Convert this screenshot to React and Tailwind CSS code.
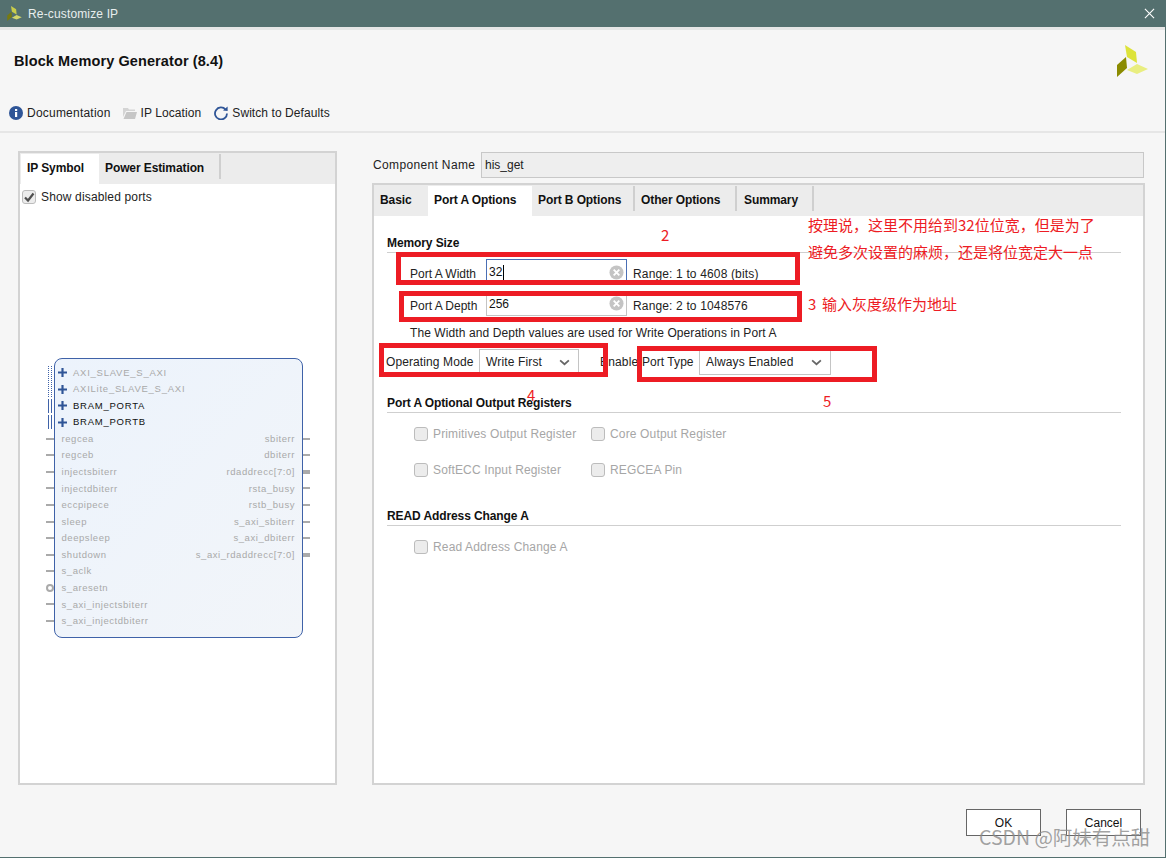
import React from "react";

const CJK = "font-['Noto_Sans_CJK_SC','Liberation_Sans',sans-serif]";

function Logo({ className, dim }) {
  return (
    <svg viewBox="0 0 31 32" className={className}>
      <polygon points="8,0 19,7 20,18 10,12" fill={dim ? "#c9cc4a" : "#dde33a"} />
      <polygon points="9,12 10,23 0,32 0,20" fill={dim ? "#777a10" : "#8b8b00"} />
      <polygon points="10,25 20,19 31,24 20,29" fill={dim ? "#d3d66a" : "#e9ee80"} />
    </svg>
  );
}

function Tool({ icon, label, className, textClass }) {
  return (
    <div className={"flex items-center gap-[4px] " + (className || "")}>
      {icon}
      <span className={"text-[#222] " + (textClass || "tracking-[0.08px]")}>{label}</span>
    </div>
  );
}

function Check({ checked, label, disabled, className }) {
  return (
    <div className={"flex h-[14px] items-center " + (className || "")}>
      <div className="flex h-[14px] w-[14px] shrink-0 items-center justify-center rounded-[3px] border border-[#bcbcbc] bg-[#ececec]">
        {checked && (
          <svg viewBox="0 0 12 12" className="h-[12px] w-[12px]">
            <path d="M2 6.5 L5 9.5 L10.5 2.5" fill="none" stroke="#4f4f4f" strokeWidth="2.2" />
          </svg>
        )}
      </div>
      <span className={"ml-[5px] tracking-[0.15px] " + (disabled ? "text-[#a6a6a6]" : "text-[#222]")}>{label}</span>
    </div>
  );
}

function Heading({ children, className }) {
  return (
    <div className={"ml-[13px] box-border flex h-[21px] w-[734px] items-center border-b border-[#cfcfcf] pt-[2px] font-bold tracking-[-0.1px] text-[#111] " + (className || "")}>
      {children}
    </div>
  );
}

function Field({ value, focused, className }) {
  return (
    <div className={"box-border flex w-[141px] items-center justify-between pl-[2px] pr-[2px] " + (focused ? "border border-[#4a6fb5] " : "border border-[#c4c4c4] ") + (className || "")}>
      <span className="flex items-center text-[#111]">
        {value}
        {focused && <span className="ml-[1px] h-[15px] w-px bg-black" />}
      </span>
      <svg viewBox="0 0 16 16" className="h-[15px] w-[15px]">
        <circle cx="8" cy="8" r="7.5" fill="#c4c4c4" />
        <path d="M5 5 L11 11 M11 5 L5 11" stroke="#fff" strokeWidth="2" />
      </svg>
    </div>
  );
}

function Select({ value, className }) {
  return (
    <div className={"box-border flex items-center justify-between border border-[#c4c4c4] pl-[6px] pr-[8px] tracking-[0.15px] text-[#222] " + (className || "")}>
      <span>{value}</span>
      <svg viewBox="0 0 12 8" className="h-[7px] w-[11px]">
        <path d="M1 1.5 L6 6 L11 1.5" fill="none" stroke="#666" strokeWidth="2" />
      </svg>
    </div>
  );
}

const ports = [
  ["AXI_SLAVE_S_AXI", "", "dot"],
  ["AXILite_SLAVE_S_AXI", "", "dot"],
  ["BRAM_PORTA", "", "bus"],
  ["BRAM_PORTB", "", "bus"],
  ["regcea", "sbiterr"],
  ["regceb", "dbiterr"],
  ["injectsbiterr", "rdaddrecc[7:0]"],
  ["injectdbiterr", "rsta_busy"],
  ["eccpipece", "rstb_busy"],
  ["sleep", "s_axi_sbiterr"],
  ["deepsleep", "s_axi_dbiterr"],
  ["shutdown", "s_axi_rdaddrecc[7:0]"],
  ["s_aclk", ""],
  ["s_aresetn", "", "ring"],
  ["s_axi_injectsbiterr", ""],
  ["s_axi_injectdbiterr", ""],
];

function PortRow({ left, right, kind }) {
  const iface = kind === "dot" || kind === "bus";
  return (
    <div className="relative flex h-[16.57px] items-center justify-between pr-[7px] text-[9.5px] tracking-[0.55px] text-[#a9a9a9]">
      {iface ? (
        <div className="flex items-center pl-[3px]">
          <svg viewBox="0 0 10 10" className="h-[9px] w-[9px]">
            <path d="M5 0 V10 M0 5 H10" stroke="#2f5597" strokeWidth="2.4" />
          </svg>
          <span className={"ml-[6px] tracking-[0.75px] " + (kind === "bus" ? "text-[#111]" : "")}>{left}</span>
        </div>
      ) : (
        <span className="pl-[6.5px]">{left}</span>
      )}
      <span>{right}</span>
      {kind === "dot" && (
        <div className="absolute left-[-7px] top-[1px] flex h-[15px] gap-[2px]">
          <div className="w-0 border-l border-dotted border-[#3f62a8]" />
          <div className="w-0 border-l border-dotted border-[#3f62a8]" />
        </div>
      )}
      {kind === "bus" && (
        <div className="absolute left-[-7px] top-[1px] flex h-[14px] gap-[2px]">
          <div className="w-px bg-[#3f62a8]" />
          <div className="w-px bg-[#3f62a8]" />
        </div>
      )}
      {!iface && kind !== "ring" && <div className="absolute left-[-9px] top-[7px] h-[2px] w-[8px] bg-[#aaaaaa]" />}
      {kind === "ring" && (
        <div className="absolute left-[-9px] top-[4px] h-[8px] w-[8px] rounded-full border-2 border-[#aaaaaa]" />
      )}
      {right && (
        <div className={"absolute right-[-8px] w-[7px] bg-[#aaaaaa] " + (right.includes("[7:0]") ? "top-[6px] h-[4px]" : "top-[7px] h-[2px]")} />
      )}
    </div>
  );
}

function Tab({ label, className }) {
  return (
    <div className={"box-border flex h-full items-center pb-[2px] font-bold tracking-[-0.1px] text-[#111] " + (className || "")}>
      {label}
    </div>
  );
}

function SepTab({ label, className }) {
  return (
    <div className={"box-border flex h-[25px] items-center border-r-2 border-[#cfcfcf] pt-[3px] font-bold tracking-[-0.1px] text-[#111] " + (className || "")}>
      {label}
    </div>
  );
}

function RedBox({ className }) {
  return <div className={"absolute box-border border-[5px] border-[#ed1c24] " + className} />;
}

function Note({ className, children }) {
  return <div className={"absolute text-[15px] leading-[18px] text-[#ed1c24] whitespace-nowrap " + CJK + " " + className}>{children}</div>;
}

export default function App() {
  return (
    <div className="relative box-border flex h-[858px] w-[1166px] flex-col overflow-hidden border-r border-b border-[#54706f] bg-[#f6f6f6] font-['Liberation_Sans',sans-serif] text-[12px]">
      <div className="flex h-[27px] items-center justify-between bg-[#54706f] pl-[7px] pr-[10px] text-[#e8eeee]">
        <div className="flex items-center gap-[6px]">
          <Logo dim className="h-[15px] w-[15px]" />
          <span className="tracking-[0.15px]">Re-customize IP</span>
        </div>
        <svg viewBox="0 0 12 12" className="h-[11px] w-[11px]">
          <path d="M1 1 L11 11 M11 1 L1 11" stroke="#fff" strokeWidth="1.2" />
        </svg>
      </div>
      <div className="h-[3px] bg-[#e6e6e6]" />

      <div className="flex items-center justify-between pl-[14px] pr-[17px] pt-[15px]">
        <div className="mt-[2px] text-[14.5px] font-bold tracking-[0.1px] text-[#111]">Block Memory Generator (8.4)</div>
        <Logo className="h-[32px] w-[31px]" />
      </div>
      <div className="mb-[10px] mt-[28px] flex h-[16px] items-center pl-[9px]">
        <Tool
          textClass="tracking-[0.22px]"
          icon={
            <svg viewBox="0 0 14 14" className="h-[14px] w-[14px]">
              <circle cx="7" cy="7" r="7" fill="#2f5597" />
              <rect x="6" y="6" width="2.2" height="5" fill="#fff" />
              <rect x="6" y="3" width="2.2" height="2" fill="#fff" />
            </svg>
          }
          label="Documentation"
        />
        <Tool
          className="ml-[12px]"
          icon={
            <svg viewBox="0 0 14 12" className="h-[12px] w-[14px]">
              <path d="M0 1 H5 L6 2.5 H12 V4 H3 L0 10 Z" fill="#d4d4d4" />
              <path d="M3.5 5 H14 L12 12 H0.5 Z" fill="#c6c6c6" />
            </svg>
          }
          label="IP Location"
        />
        <Tool
          className="ml-[13px]"
          icon={
            <svg viewBox="0 0 14 14" className="h-[14px] w-[14px]">
              <path d="M11.6 3.6 A6 6 0 1 0 13 7.5" fill="none" stroke="#2f5597" strokeWidth="1.8" />
              <polygon points="9,4.6 13.6,5 13.6,0.4" fill="#2f5597" />
            </svg>
          }
          label="Switch to Defaults"
        />
      </div>
      <div className="h-[2px] bg-[#e6e6e6]" />

      <div className="flex pl-[18px]">
        <div className="mt-[18px] box-border flex h-[634px] w-[319px] flex-col border-2 border-[#d3d3d3] bg-white">
          <div className="flex h-[31px] items-start bg-[#ececec] pl-px pt-px">
            <Tab label="IP Symbol" className="w-[78px] bg-white pl-[6px]" />
            <SepTab label="Power Estimation" className="w-[122px] pl-[6px]" />
          </div>
          <Check checked label="Show disabled ports" className="ml-[2px] mt-[6px]" />
          <div className="ml-[34px] mt-[154px] box-border h-[280px] w-[249px] rounded-[8px] border border-[#3f62a8] bg-gradient-to-br from-[#ecf3fc] to-[#f2f5f9] pt-[5.5px]">
            {ports.map((p) => (
              <PortRow key={p[0]} left={p[0]} right={p[1]} kind={p[2]} />
            ))}
          </div>
        </div>

        <div className="ml-[35px] flex w-[773px] flex-col">
          <div className="mt-[19px] flex h-[26px] items-center">
            <span className="ml-px w-[108px] tracking-[0.35px] text-[#222]">Component Name</span>
            <div className="box-border flex h-[26px] w-[663px] items-center border border-[#c8c8c8] bg-[#eeeeee] pl-[3px] text-[#222]">his_get</div>
          </div>
          <div className="mt-[5px] box-border flex h-[602px] flex-col border-2 border-[#d3d3d3] bg-white">
            <div className="flex h-[31px] items-start bg-[#ececec] pl-px pt-px">
              <Tab label="Basic" className="w-[53px] pl-[5px]" />
              <Tab label="Port A Options" className="w-[104px] bg-white pl-[6px]" />
              <SepTab label="Port B Options" className="w-[103px] pl-[6px]" />
              <SepTab label="Other Options" className="w-[102px] pl-[6px]" />
              <SepTab label="Summary" className="w-[77px] pl-[7px]" />
            </div>
            <div className="flex flex-col pt-[16px]">
              <Heading>Memory Size</Heading>
              <div className="mt-[6px] flex h-[26px] items-center pl-[36px]">
                <span className="mt-[4px] w-[76px] text-[#222]">Port A Width</span>
                <Field focused value="32" className="h-[26px]" />
                <span className="ml-[6px] mt-[4px] tracking-[0.15px] text-[#222]">Range: 1 to 4608 (bits)</span>
              </div>
              <div className="mt-[6px] flex h-[25px] items-center pl-[36px]">
                <span className="mt-[4px] w-[76px] text-[#222]">Port A Depth</span>
                <Field value="256" className="h-[25px]" />
                <span className="ml-[6px] mt-[4px] tracking-[0.15px] text-[#222]">Range: 2 to 1048576</span>
              </div>
              <div className="mt-[10px] h-[15px] pl-[36px] leading-[15px] tracking-[0.09px] text-[#222]">
                The Width and Depth values are used for Write Operations in Port A
              </div>
              <div className="mt-[8px] flex h-[26px] items-center pl-[12px]">
                <span className="w-[93px] tracking-[0.1px] text-[#222]">Operating Mode</span>
                <Select value="Write First" className="h-[26px] w-[100px]" />
                <span className="ml-[21px] w-[42px] tracking-[0.15px] text-[#222]">Enable</span>
                <span className="w-[57px] tracking-[0.05px] text-[#222]">Port Type</span>
                <Select value="Always Enabled" className="h-[26px] w-[132px]" />
              </div>
              <Heading className="mt-[17px]">Port A Optional Output Registers</Heading>
              <div className="mt-[14px] flex pl-[40px]">
                <Check disabled label="Primitives Output Register" className="w-[177px]" />
                <Check disabled label="Core Output Register" />
              </div>
              <div className="mt-[22px] flex pl-[40px]">
                <Check disabled label="SoftECC Input Register" className="w-[177px]" />
                <Check disabled label="REGCEA Pin" />
              </div>
              <Heading className="mt-[28px]">READ Address Change A</Heading>
              <div className="mt-[14px] flex pl-[40px]">
                <Check disabled label="Read Address Change A" />
              </div>
            </div>
          </div>
        </div>
      </div>

      <div className="mt-[24px] flex justify-end gap-[25px] pr-[24px]">
        <button className="box-border h-[27px] w-[75px] border border-[#666] bg-white text-[#111]">OK</button>
        <button className="box-border h-[27px] w-[75px] border border-[#666] bg-white text-[#111]">Cancel</button>
      </div>

      <RedBox className="left-[396px] top-[252px] h-[33px] w-[404px]" />
      <RedBox className="left-[399px] top-[291px] h-[31px] w-[403px]" />
      <RedBox className="left-[379px] top-[343px] h-[34px] w-[229px]" />
      <RedBox className="left-[637px] top-[346px] h-[36px] w-[240px]" />

      <Note className="left-[661px] top-[226px]">2</Note>
      <Note className="left-[808px] top-[216px]">按理说，这里不用给到32位位宽，但是为了</Note>
      <Note className="left-[808px] top-[243px]">避免多次设置的麻烦，还是将位宽定大一点</Note>
      <Note className="left-[808px] top-[295px]">3</Note>
      <Note className="left-[822px] top-[295px]">输入灰度级作为地址</Note>
      <Note className="left-[527px] top-[386px]">4</Note>
      <Note className="left-[823px] top-[392px]">5</Note>
      <div className={"absolute left-[979px] top-[825px] whitespace-nowrap text-[19.5px] leading-[24px] text-[#8a8a8a]/80 " + CJK}>CSDN @阿妹有点甜</div>
    </div>
  );
}
